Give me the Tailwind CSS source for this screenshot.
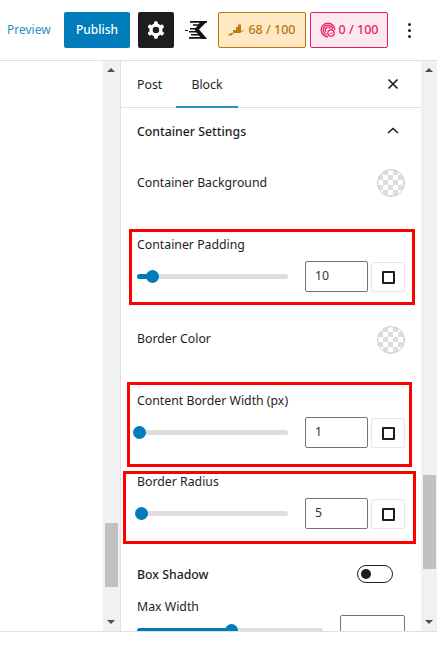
<!doctype html>
<html><head><meta charset="utf-8"><script src="https://cdn.jsdelivr.net/npm/@tailwindcss/browser@4"></script></head>
<body class="bg-white">
<div class="relative w-[437px] h-[646px] overflow-hidden bg-white font-['Noto_Sans','Open_Sans',sans-serif] text-[12.3px] text-[#1e1e1e]">
  <header class="h-[61px] border-b border-[#e0e0e0] flex items-start pt-3">
    <span class="ml-[7px] w-[57px] h-9 flex items-center text-[#2e8fc5] text-[12px]">Preview</span>
    <button class="w-[66px] h-9 bg-[#007cba] rounded-[2px] text-white text-[12px] font-medium">Publish</button>
    <button class="ml-2 w-9 h-9 bg-[#1e1e1e] rounded-[2px] flex items-center justify-center">
      <svg width="26" height="26" viewBox="0 0 24 24" fill="#fff"><path fill-rule="evenodd" d="M10.289 4.836A1 1 0 0111.275 4h1.306a1 1 0 01.987.836l.244 1.466c.787.26 1.503.679 2.108 1.218l1.393-.522a1 1 0 011.216.437l.653 1.13a1 1 0 01-.23 1.273l-1.148.944a6.025 6.025 0 010 2.435l1.149.946a1 1 0 01.23 1.272l-.653 1.13a1 1 0 01-1.216.437l-1.394-.522c-.605.54-1.32.958-2.108 1.218l-.244 1.466a1 1 0 01-.987.836h-1.306a1 1 0 01-.986-.836l-.244-1.466a5.995 5.995 0 01-2.108-1.218l-1.394.522a1 1 0 01-1.217-.436l-.653-1.131a1 1 0 01.23-1.272l1.149-.946a6.026 6.026 0 010-2.435l-1.148-.944a1 1 0 01-.23-1.272l.653-1.131a1 1 0 011.217-.437l1.393.522a5.994 5.994 0 012.108-1.218l.244-1.466zM14.929 12a3 3 0 11-6 0 3 3 0 016 0z"/></svg>
    </button>
    <span class="ml-[10px] w-[24px] h-9 flex items-center">
      <svg width="24" height="20" viewBox="0 0 24 20" fill="#111"><path d="M6 1h17v1.800H6zM9 4.200h8.500l-1.700 1.600H9zM1 10h3v1H1zM6 8h8.500l-.8 1.600H6zM5 11h9l.8 1.400H5zM7 14h9l1 1.500H7zM5 17h15l3 1.800H5z"/><path d="M23 1.500l-8 8 8 9.300h-5.500l-7-9 6-8.300z"/></svg>
    </span>
    <span class="ml-[10px] w-[88px] h-9 bg-[#ffe8c4] border border-[#b9770e] rounded-[2px] flex items-center justify-center gap-[3px] text-[#b9770e] text-[12.5px] font-medium">
      <svg width="17" height="14" viewBox="0 0 17 14" fill="#c17d14"><path d="M0 12l3-2h2V7h3V4h2V1.500h3V8l4-1.500-3.500 2.500c-1 1-2 1-3 1H6l-3 2.500H1z"/></svg>68 / 100</span>
    <span class="ml-1 w-[78px] h-9 bg-[#fce8ef] border border-[#e91e63] rounded-[2px] flex items-center justify-center gap-[3px] text-[#e91e63] text-[12.5px] font-medium">
      <svg width="16" height="16" viewBox="0 0 16 16" fill="none" stroke="#e91e63" stroke-width="1.300"><path d="M8 14.800A6.800 6.800 0 1 1 14.800 8"/><path d="M6.500 12.500A4.800 4.800 0 1 1 12.800 7"/><path d="M6 9.800A2.800 2.800 0 1 1 10.500 6.500"/><circle cx="11" cy="11" r="3.200"/><path d="M9.700 11l1 1 1.700-1.800" stroke-width="1"/></svg>0 / 100</span>
    <span class="ml-5 w-[3px] h-9 flex flex-col justify-center gap-[3px]"><i class="block w-[3px] h-[3px] rounded-full bg-[#1e1e1e]"></i><i class="block w-[3px] h-[3px] rounded-full bg-[#1e1e1e]"></i><i class="block w-[3px] h-[3px] rounded-full bg-[#1e1e1e]"></i></span>
  </header>

  <main class="relative h-[571px] flex overflow-hidden border-b border-[#e0e0e0]">
    <div class="w-[103px] bg-white"></div>
    <div class="relative w-[18px] bg-[#f1f1f1] border-r border-[#e0e0e0]">
      <i class="absolute left-[4px] top-[7px] w-0 h-0 border-x-[4px] border-x-transparent border-b-[4px] border-b-[#505050]"></i>
      <i class="absolute left-[2px] top-[462px] w-[13px] h-[64px] bg-[#c1c1c1]"></i>
      <i class="absolute left-[4px] top-[559px] w-0 h-0 border-x-[4px] border-x-transparent border-t-[4px] border-t-[#505050]"></i>
    </div>
    <aside class="w-[300px] pl-4 pr-4 bg-white shrink-0">
      <div class="-mx-4 h-[47px] border-b border-[#e0e0e0] flex relative">
        <span class="ml-[16px] w-[39px] flex items-center pt-[3px] text-[#1e1e1e]">Post</span>
        <span class="relative w-[62px] flex items-center justify-center pt-[3px] text-[#1e1e1e] border-b-2 border-[#2e8fc5] h-[47px]">Block</span>
        <svg class="absolute left-[264px] top-[15px]" width="16" height="16" viewBox="0 0 16 16" stroke="#1e1e1e" stroke-width="1.700"><path d="M3.500 3.500l9 9M12.500 3.500l-9 9"/></svg>
      </div>
      <div class="h-[46px] flex items-center justify-between font-medium pt-[2px]">
        <span>Container Settings</span>
        <svg class="mr-[5px] -mt-[2px]" width="14" height="14" viewBox="0 0 14 14" fill="none" stroke="#1e1e1e" stroke-width="1.600"><path d="M2 9l5-4.500L12 9"/></svg>
      </div>
      <div class="h-[58px] flex items-center justify-between"><span>Container Background</span>
        <span class="w-7 h-7 rounded-full border border-[#ccc] bg-[conic-gradient(#ddd_25%,#fff_0_50%,#ddd_0_75%,#fff_0)] bg-[length:10px_10px]"></span></div>

      <div class="mt-[23px] h-5 flex items-center">Container Padding</div>
      <div class="mt-[6px] h-[31px] flex items-center">
        <div class="relative w-[151px] h-[5px] rounded-full bg-[#dedede]"><i class="absolute left-0 top-0 h-[5px] w-[15px] rounded-full bg-[#007cba]"></i><i class="absolute left-[9px] top-[-4px] w-[13px] h-[13px] rounded-full bg-[#007cba]"></i></div>
        <div class="ml-[17px] w-[63px] h-[31px] border border-[#757575] rounded-[2px] flex items-center pl-[9px] text-[#2c3338]">10</div>
        <div class="ml-[3px] mt-[1px] w-[34px] h-[30px] border border-[#e6e6e6] rounded-[2px] flex items-center justify-center"><i class="block w-[13px] h-[13px] border-2 border-[#1e1e1e] rounded-[1px]"></i></div>
      </div>

      <div class="mt-[34px] h-7 flex items-start justify-between"><span class="mt-[3px] h-5 flex items-center">Border Color</span>
        <span class="w-7 h-7 rounded-full border border-[#ccc] bg-[conic-gradient(#ddd_25%,#fff_0_50%,#ddd_0_75%,#fff_0)] bg-[length:10px_10px]"></span></div>

      <div class="mt-[37px] h-5 flex items-center">Content Border Width (px)</div>
      <div class="mt-[6px] h-[31px] flex items-center">
        <div class="relative w-[151px] h-[5px] rounded-full bg-[#dedede]"><i class="absolute left-[-4px] top-[-4px] w-[13px] h-[13px] rounded-full bg-[#007cba]"></i></div>
        <div class="ml-[17px] w-[63px] h-[31px] border border-[#757575] rounded-[2px] flex items-center pl-[9px] text-[#2c3338]">1</div>
        <div class="ml-[3px] mt-[1px] w-[34px] h-[30px] border border-[#e6e6e6] rounded-[2px] flex items-center justify-center"><i class="block w-[13px] h-[13px] border-2 border-[#1e1e1e] rounded-[1px]"></i></div>
      </div>

      <div class="mt-6 h-5 flex items-center">Border Radius</div>
      <div class="mt-[6px] h-[31px] flex items-center">
        <div class="relative w-[151px] h-[5px] rounded-full bg-[#dedede]"><i class="absolute left-[-2px] top-[-4px] w-[13px] h-[13px] rounded-full bg-[#007cba]"></i></div>
        <div class="ml-[17px] w-[63px] h-[31px] border border-[#757575] rounded-[2px] flex items-center pl-[9px] text-[#2c3338]">5</div>
        <div class="ml-[3px] mt-[1px] w-[34px] h-[30px] border border-[#e6e6e6] rounded-[2px] flex items-center justify-center"><i class="block w-[13px] h-[13px] border-2 border-[#1e1e1e] rounded-[1px]"></i></div>
      </div>

      <div class="mt-9 h-5 flex items-center justify-between font-medium"><span>Box Shadow</span>
        <span class="relative mr-3 -mt-[2px] w-9 h-[18px] rounded-full border border-[#1e1e1e]"><i class="absolute left-[3px] top-[3px] w-[10px] h-[10px] rounded-full bg-[#1e1e1e]"></i></span></div>

      <div class="mt-3 h-5 flex items-center">Max Width</div>
      <div class="mt-[-2px] h-[31px] flex items-start">
        <div class="relative mt-[13px] w-[187px] h-[5px] rounded-full bg-[#dedede]"><i class="absolute left-0 top-0 h-[5px] w-[95px] rounded-full bg-[#007cba]"></i><i class="absolute left-[88px] top-[-4px] w-[13px] h-[13px] rounded-full bg-[#007cba]"></i></div>
        <div class="ml-[17px] w-[65px] h-[31px] border border-[#757575] rounded-[2px]"></div>
      </div>
    </aside>
    <div class="relative w-[16px] bg-[#f1f1f1]">
      <i class="absolute left-[4px] top-[7px] w-0 h-0 border-x-[4px] border-x-transparent border-b-[4px] border-b-[#505050]"></i>
      <i class="absolute left-[2px] top-[414px] w-[13px] h-[94px] bg-[#c1c1c1]"></i>
      <i class="absolute left-[4px] top-[559px] w-0 h-0 border-x-[4px] border-x-transparent border-t-[4px] border-t-[#505050]"></i>
    </div>
  </main>

  <i class="absolute left-[129px] top-[229px] w-[286px] h-[76px] border-[3px] border-[#ff0000]"></i>
  <i class="absolute left-[127px] top-[382px] w-[285px] h-[85px] border-[3px] border-[#ff0000]"></i>
  <i class="absolute left-[123px] top-[471px] w-[293px] h-[73px] border-[3px] border-[#ff0000]"></i>
</div>
</body></html>
